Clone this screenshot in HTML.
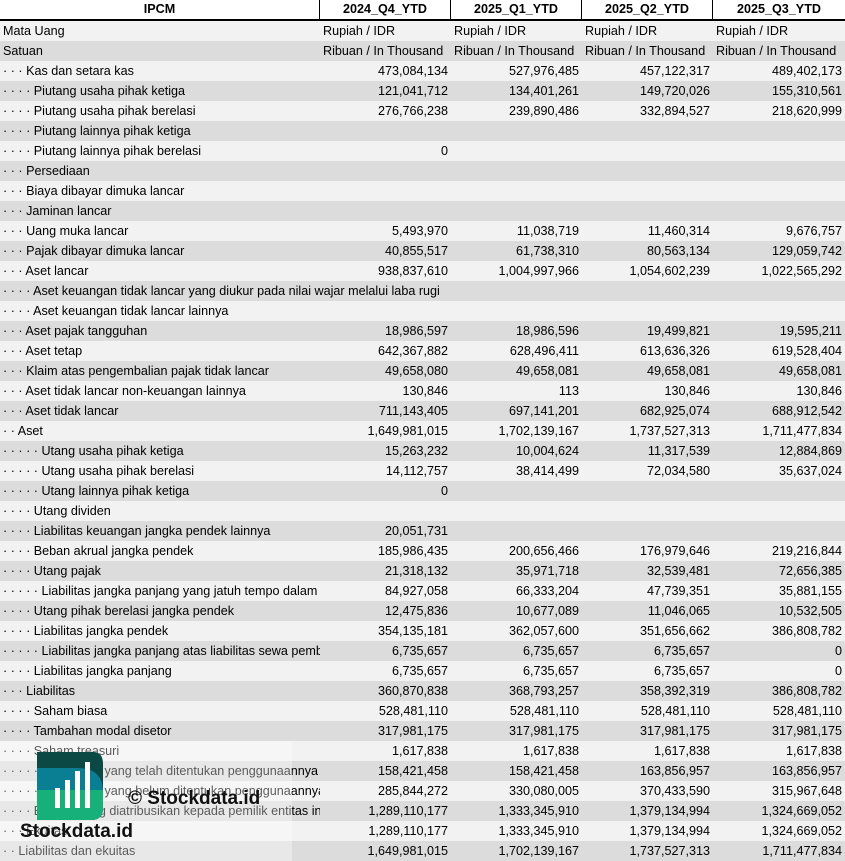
<!DOCTYPE html>
<html><head><meta charset="utf-8"><style>
*{margin:0;padding:0;box-sizing:border-box}
body{width:845px;height:861px;overflow:hidden;background:#fff;font-family:"Liberation Sans",sans-serif;font-size:12.6px;color:#000;position:relative}
.r{display:flex;height:20px;line-height:20px;white-space:nowrap}
.r:nth-child(odd){background:#f2f2f2}
.r:nth-child(even){background:#dcdcdc}
.r div{overflow:hidden;flex:none}
.l{width:320px;padding-left:3px}
.v{width:131px;text-align:right;padding-right:3px}
.v:last-child{width:132px}
.t{width:131px;padding-left:3px}
.ov{overflow:visible!important}
.h{display:flex;height:21px;line-height:19px;border-bottom:2px solid #000;font-weight:bold;background:#fff;text-align:center}
.h div{border-right:1px solid #000}
.h div:last-child{border-right:none}
.d{color:#555}
.fade{position:absolute;left:0;top:741px;width:292px;height:120px;background:rgba(255,255,255,.35)}
</style></head><body>
<div class="h"><div style="width:320px">IPCM</div><div style="width:131px">2024_Q4_YTD</div><div style="width:131px">2025_Q1_YTD</div><div style="width:131px">2025_Q2_YTD</div><div style="width:132px">2025_Q3_YTD</div></div>
<div id="b">
<div class="r"><div class="l">Mata Uang</div><div class="t">Rupiah / IDR</div><div class="t">Rupiah / IDR</div><div class="t">Rupiah / IDR</div><div class="t">Rupiah / IDR</div></div>
<div class="r"><div class="l">Satuan</div><div class="t">Ribuan / In Thousand</div><div class="t">Ribuan / In Thousand</div><div class="t">Ribuan / In Thousand</div><div class="t" style="width:132px">Ribuan / In Thousand</div></div>
<div class="r"><div class="l">· · · Kas dan setara kas</div><div class="v">473,084,134</div><div class="v">527,976,485</div><div class="v">457,122,317</div><div class="v">489,402,173</div></div>
<div class="r"><div class="l">· · · · Piutang usaha pihak ketiga</div><div class="v">121,041,712</div><div class="v">134,401,261</div><div class="v">149,720,026</div><div class="v">155,310,561</div></div>
<div class="r"><div class="l">· · · · Piutang usaha pihak berelasi</div><div class="v">276,766,238</div><div class="v">239,890,486</div><div class="v">332,894,527</div><div class="v">218,620,999</div></div>
<div class="r"><div class="l">· · · · Piutang lainnya pihak ketiga</div><div class="v"></div><div class="v"></div><div class="v"></div><div class="v"></div></div>
<div class="r"><div class="l">· · · · Piutang lainnya pihak berelasi</div><div class="v">0</div><div class="v"></div><div class="v"></div><div class="v"></div></div>
<div class="r"><div class="l">· · · Persediaan</div><div class="v"></div><div class="v"></div><div class="v"></div><div class="v"></div></div>
<div class="r"><div class="l">· · · Biaya dibayar dimuka lancar</div><div class="v"></div><div class="v"></div><div class="v"></div><div class="v"></div></div>
<div class="r"><div class="l">· · · Jaminan lancar</div><div class="v"></div><div class="v"></div><div class="v"></div><div class="v"></div></div>
<div class="r"><div class="l">· · · Uang muka lancar</div><div class="v">5,493,970</div><div class="v">11,038,719</div><div class="v">11,460,314</div><div class="v">9,676,757</div></div>
<div class="r"><div class="l">· · · Pajak dibayar dimuka lancar</div><div class="v">40,855,517</div><div class="v">61,738,310</div><div class="v">80,563,134</div><div class="v">129,059,742</div></div>
<div class="r"><div class="l">· · · Aset lancar</div><div class="v">938,837,610</div><div class="v">1,004,997,966</div><div class="v">1,054,602,239</div><div class="v">1,022,565,292</div></div>
<div class="r"><div class="l ov">· · · · Aset keuangan tidak lancar yang diukur pada nilai wajar melalui laba rugi</div><div class="v"></div><div class="v"></div><div class="v"></div><div class="v"></div></div>
<div class="r"><div class="l">· · · · Aset keuangan tidak lancar lainnya</div><div class="v"></div><div class="v"></div><div class="v"></div><div class="v"></div></div>
<div class="r"><div class="l">· · · Aset pajak tangguhan</div><div class="v">18,986,597</div><div class="v">18,986,596</div><div class="v">19,499,821</div><div class="v">19,595,211</div></div>
<div class="r"><div class="l">· · · Aset tetap</div><div class="v">642,367,882</div><div class="v">628,496,411</div><div class="v">613,636,326</div><div class="v">619,528,404</div></div>
<div class="r"><div class="l">· · · Klaim atas pengembalian pajak tidak lancar</div><div class="v">49,658,080</div><div class="v">49,658,081</div><div class="v">49,658,081</div><div class="v">49,658,081</div></div>
<div class="r"><div class="l">· · · Aset tidak lancar non-keuangan lainnya</div><div class="v">130,846</div><div class="v">113</div><div class="v">130,846</div><div class="v">130,846</div></div>
<div class="r"><div class="l">· · · Aset tidak lancar</div><div class="v">711,143,405</div><div class="v">697,141,201</div><div class="v">682,925,074</div><div class="v">688,912,542</div></div>
<div class="r"><div class="l">· · Aset</div><div class="v">1,649,981,015</div><div class="v">1,702,139,167</div><div class="v">1,737,527,313</div><div class="v">1,711,477,834</div></div>
<div class="r"><div class="l">· · · · · Utang usaha pihak ketiga</div><div class="v">15,263,232</div><div class="v">10,004,624</div><div class="v">11,317,539</div><div class="v">12,884,869</div></div>
<div class="r"><div class="l">· · · · · Utang usaha pihak berelasi</div><div class="v">14,112,757</div><div class="v">38,414,499</div><div class="v">72,034,580</div><div class="v">35,637,024</div></div>
<div class="r"><div class="l">· · · · · Utang lainnya pihak ketiga</div><div class="v">0</div><div class="v"></div><div class="v"></div><div class="v"></div></div>
<div class="r"><div class="l">· · · · Utang dividen</div><div class="v"></div><div class="v"></div><div class="v"></div><div class="v"></div></div>
<div class="r"><div class="l">· · · · Liabilitas keuangan jangka pendek lainnya</div><div class="v">20,051,731</div><div class="v"></div><div class="v"></div><div class="v"></div></div>
<div class="r"><div class="l">· · · · Beban akrual jangka pendek</div><div class="v">185,986,435</div><div class="v">200,656,466</div><div class="v">176,979,646</div><div class="v">219,216,844</div></div>
<div class="r"><div class="l">· · · · Utang pajak</div><div class="v">21,318,132</div><div class="v">35,971,718</div><div class="v">32,539,481</div><div class="v">72,656,385</div></div>
<div class="r"><div class="l">· · · · · Liabilitas jangka panjang yang jatuh tempo dalam satu tahun</div><div class="v">84,927,058</div><div class="v">66,333,204</div><div class="v">47,739,351</div><div class="v">35,881,155</div></div>
<div class="r"><div class="l">· · · · Utang pihak berelasi jangka pendek</div><div class="v">12,475,836</div><div class="v">10,677,089</div><div class="v">11,046,065</div><div class="v">10,532,505</div></div>
<div class="r"><div class="l">· · · · Liabilitas jangka pendek</div><div class="v">354,135,181</div><div class="v">362,057,600</div><div class="v">351,656,662</div><div class="v">386,808,782</div></div>
<div class="r"><div class="l">· · · · · Liabilitas jangka panjang atas liabilitas sewa pembiayaan</div><div class="v">6,735,657</div><div class="v">6,735,657</div><div class="v">6,735,657</div><div class="v">0</div></div>
<div class="r"><div class="l">· · · · Liabilitas jangka panjang</div><div class="v">6,735,657</div><div class="v">6,735,657</div><div class="v">6,735,657</div><div class="v">0</div></div>
<div class="r"><div class="l">· · · Liabilitas</div><div class="v">360,870,838</div><div class="v">368,793,257</div><div class="v">358,392,319</div><div class="v">386,808,782</div></div>
<div class="r"><div class="l">· · · · Saham biasa</div><div class="v">528,481,110</div><div class="v">528,481,110</div><div class="v">528,481,110</div><div class="v">528,481,110</div></div>
<div class="r"><div class="l">· · · · Tambahan modal disetor</div><div class="v">317,981,175</div><div class="v">317,981,175</div><div class="v">317,981,175</div><div class="v">317,981,175</div></div>
<div class="r"><div class="l">· · · · Saham treasuri</div><div class="v">1,617,838</div><div class="v">1,617,838</div><div class="v">1,617,838</div><div class="v">1,617,838</div></div>
<div class="r"><div class="l">· · · · · Saldo laba yang telah ditentukan penggunaannya</div><div class="v">158,421,458</div><div class="v">158,421,458</div><div class="v">163,856,957</div><div class="v">163,856,957</div></div>
<div class="r"><div class="l">· · · · · Saldo laba yang belum ditentukan penggunaannya</div><div class="v">285,844,272</div><div class="v">330,080,005</div><div class="v">370,433,590</div><div class="v">315,967,648</div></div>
<div class="r"><div class="l">· · · · Ekuitas yang diatribusikan kepada pemilik entitas induk</div><div class="v">1,289,110,177</div><div class="v">1,333,345,910</div><div class="v">1,379,134,994</div><div class="v">1,324,669,052</div></div>
<div class="r"><div class="l">· · · Ekuitas</div><div class="v">1,289,110,177</div><div class="v">1,333,345,910</div><div class="v">1,379,134,994</div><div class="v">1,324,669,052</div></div>
<div class="r"><div class="l">· · Liabilitas dan ekuitas</div><div class="v">1,649,981,015</div><div class="v">1,702,139,167</div><div class="v">1,737,527,313</div><div class="v">1,711,477,834</div></div>
</div>
<div class="fade"></div>
<svg style="position:absolute;left:37px;top:752px" width="66" height="68" viewBox="0 0 66 68">
<defs><clipPath id="c"><path d="M0 0H56Q66 0 66 12V56Q66 68 54 68H0Z"/></clipPath></defs>
<g clip-path="url(#c)">
<rect width="66" height="68" fill="#0b4a44"/>
<path d="M0 16H40Q66 16 66 40V68H0Z" fill="#0a7e92"/>
<path d="M0 38H66V68H0Z" fill="#17b07a"/>
</g>
<rect x="18" y="36" width="5" height="20" fill="#fff"/><rect x="28" y="28" width="5" height="28" fill="#fff"/><rect x="38" y="19" width="5" height="37" fill="#fff"/><rect x="48" y="10" width="5" height="46" fill="#fff"/>
</svg>
<div style="position:absolute;left:128px;top:788px;font-weight:bold;font-size:19px;color:#111">© Stockdata.id</div>
<div style="position:absolute;left:20px;top:821px;font-weight:bold;font-size:19px;color:#111">Stockdata.id</div>
</body></html>
